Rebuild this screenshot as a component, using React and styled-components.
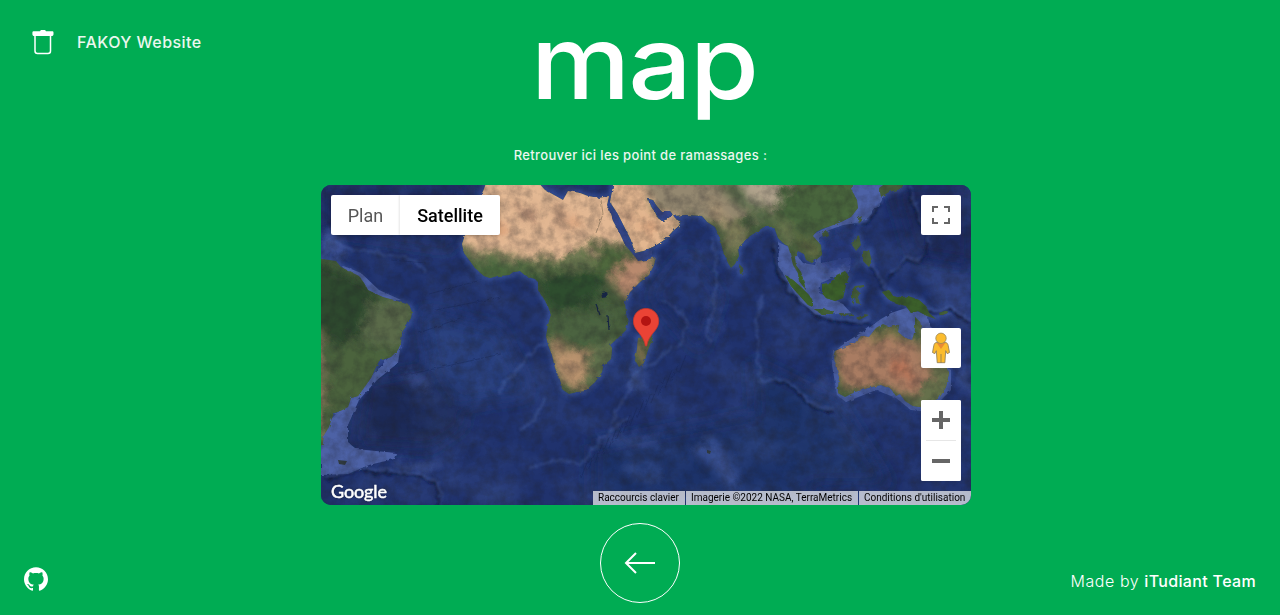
import React from 'react';
import styled, { createGlobalStyle } from 'styled-components';

const GlobalStyle = createGlobalStyle`
  * { box-sizing: border-box; }
  body { margin: 0; background: #00ac53; overflow: hidden; }
  button { font: inherit; border: 0; padding: 0; cursor: pointer; }
  a { color: inherit; text-decoration: none; }
`;

const Page = styled.div`
  display: grid;
  grid-template-columns: 321px 650px 1fr;
  height: 615px;
  background: #00ac53;
  color: #fff;
  font-family: Inter, 'Liberation Sans', sans-serif;
`;

const Side = styled.div`
  display: flex;
  flex-direction: column;
  justify-content: ${(p) => (p.$end ? 'flex-end' : 'space-between')};
  align-items: ${(p) => (p.$end ? 'flex-end' : 'flex-start')};
  padding: ${(p) => (p.$end ? '0 24px 23px 0' : '29px 0 24px 24px')};
`;

const Brand = styled.a`
  display: flex;
  align-items: center;
  gap: 22px;
  padding-left: 7px;
  height: 26px;
  font-size: 16px;
  font-weight: 500;
  letter-spacing: 0.46px;
  color: #ebf7ef;
  white-space: nowrap;
`;

const IconLink = styled.a`
  display: block;
  height: 24px;
  svg { display: block; }
`;

const Credit = styled.p`
  margin: 0;
  font-size: 16px;
  line-height: 22px;
  font-weight: 300;
  letter-spacing: 0.55px;
  white-space: nowrap;
  strong { font-weight: 500; letter-spacing: 0.34px; }
`;

const Main = styled.main`
  display: flex;
  flex-direction: column;
  align-items: center;
`;

const Title = styled.h1`
  margin: 0 4px 0 0;
  height: 140px;
  font-size: 102px;
  line-height: 124px;
  font-weight: 500;
  letter-spacing: -2px;
  transform: scaleX(1.1);
`;

const Intro = styled.p`
  margin: 0 11px 0 0;
  padding-top: 6px;
  height: 45px;
  font-size: 13px;
  line-height: 18px;
  font-weight: 500;
  letter-spacing: 0.35px;
  color: #ebf7ef;
  white-space: nowrap;
`;

const MapFrame = styled.section`
  display: grid;
  width: 650px;
  height: 320px;
  border-radius: 10px;
  overflow: hidden;
  background: #1d2f69;
  font-family: Roboto, sans-serif;
  > * { grid-area: 1 / 1; }
`;

const MapOverlay = styled.div`
  z-index: 1;
  display: flex;
  flex-direction: column;
  justify-content: space-between;
`;

const MapBody = styled.div`
  display: flex;
  justify-content: space-between;
  align-items: flex-start;
  padding: 10px 10px 0;
`;

const TypeSwitch = styled.div`
  display: flex;
  height: 40px;
  background: #fff;
  border-radius: 2px;
  box-shadow: 0 1px 4px -1px rgba(0, 0, 0, 0.3);
`;

const TypeButton = styled.button`
  width: ${(p) => p.$width};
  background: transparent;
  font-size: 18px;
  font-weight: ${(p) => (p.$active ? 500 : 400)};
  color: ${(p) => (p.$active ? '#000' : '#565656')};
  & + & { box-shadow: -1px 0 2px rgba(0, 0, 0, 0.1); }
`;

const Controls = styled.div`
  display: flex;
  flex-direction: column;
`;

const Control = styled.button`
  display: flex;
  align-items: center;
  justify-content: center;
  width: 40px;
  height: 40px;
  margin-top: ${(p) => p.$gap || '0'};
  background: #fff;
  border-radius: 2px;
`;

const Zoom = styled.div`
  display: flex;
  flex-direction: column;
  align-items: center;
  width: 40px;
  height: 81px;
  margin-top: 32px;
  background: #fff;
  border-radius: 2px;
`;

const Divider = styled.span`
  width: 30px;
  height: 1px;
  background: #e6e6e6;
`;

const MapFooter = styled.div`
  display: flex;
  justify-content: space-between;
  align-items: flex-end;
  height: 24px;
`;

const Logo = styled.span`
  padding-left: 10px;
  height: 24px;
  font-family: Lato, sans-serif;
  font-size: 18px;
  line-height: 21px;
  font-weight: 400;
  -webkit-text-stroke: 0.5px #fff;
  letter-spacing: -0.1px;
  text-shadow: 0 0 2px rgba(0, 0, 0, 0.6);
`;

const Legal = styled.div`
  display: flex;
  gap: 1px;
  height: 14px;
  font-size: 10px;
  line-height: 14px;
  color: #000;
`;

const LegalItem = styled.span`
  width: ${(p) => p.$width};
  padding-left: 5px;
  background: rgba(245, 245, 245, 0.7);
  white-space: nowrap;
`;

const Back = styled.button`
  display: flex;
  align-items: center;
  justify-content: center;
  width: 80px;
  height: 80px;
  margin: 18px 12px 0 0;
  border: 1px solid #fff;
  border-radius: 50%;
  background: transparent;
`;

const Satellite = styled.svg`
  display: block;
  width: 650px;
  height: 320px;
`;

const LAND = {
  america:
    'M-5 73L8 75 15 76 20 82 28 86 38 91 43 98 47 105 53 108 62 112 76 116 88 120 91 127 90 133 86 140 81 147 80 158 77 165 70 172 58 176 54 184 50 193 45 200 37 211 30 213 27 222 19 226 13 228 10 236 8 242 3 250 2 258 -5 268Z',
  africa:
    'M166-5L163 4 159 13 152 26 147 38 144 50 141 59 143 68 149 76 154 83 163 91 169 93 176 91 188 90 192 87 199 86 205 91 214 94 217 97 217 105 222 113 227 121 230 130 227 140 225 151 227 160 231 170 234 183 239 195 242 205 248 209 256 207 264 206 274 197 281 187 282 181 290 174 291 163 289 160 297 153 305 145 307 138 305 128 304 117 309 107 318 98 328 90 333 80 335 72 325 75 317 76 311 68 304 60 299 49 292 36 286 20 288 11 278 13 267 11 259 8 247 6 242 15 233 10 224 5 215-5Z',
  asia:
    'M293-5L291 7 289 17 297 29 303 41 310 55 314 68 323 66 334 61 345 54 352 46 358 41 360 37 355 34 351 29 347 34 341 36 337 33 334 27 329 20 327 14 332 15 335 20 340 26 349 26 353 31 365 30 381 31 386 37 394 42 398 51 402 66 407 78 410 83 414 79 418 71 417 63 424 56 429 51 437 46 443 42 453 42 457 53 463 59 467 61 469 68 472 80 477 88 478 96 485 105 482 94 480 87 475 80 474 72 477 66 483 69 485 75 491 78 501 70 500 60 492 51 495 47 501 44 507 42 520 37 530 32 537 23 536 15 530 4 532-5Z',
  australia:
    'M514 166L523 162 534 158 540 151 548 152 555 143 562 139 569 142 578 140 577 147 584 153 591 155 594 145 594 132 599 137 601 146 607 156 617 166 624 176 628 188 625 202 617 215 606 223 592 221 584 216 579 209 575 211 570 204 560 200 547 203 534 207 524 212 517 208 518 192 515 179 512 172Z',
};

const ISLANDS = [
  'M317 153L324 152 330 147 332 153 327 165 323 178 318 182 314 175 316 164Z',
  'M418 79L422 83 423 88 419 89Z',
  'M464 90L472 95 481 103 488 110 492 117 492 122 487 120 478 110 470 101Z',
  'M493 124L503 124 514 127 513 129 500 129Z M518 128L532 129 532 130 519 130Z M535 133L544 129 548 130 538 135Z',
  'M501 99L509 98 516 90 524 86 528 91 525 100 522 113 514 116 505 113 501 108Z',
  'M531 105L534 101 543 100 543 102 535 104 539 108 537 112 539 119 535 118 534 112 531 119Z',
  'M534 53L538 50 540 60 535 66 531 60Z M542 66L548 65 551 76 548 82 542 76Z M537 77L533 82Z',
  'M561 107L568 105 572 111 579 113 587 111 598 115 605 121 608 128 615 134 606 131 597 126 590 128 585 121 575 118 568 115Z',
  'M501 48L506 46 507 50 502 52Z M537 33L541 31 538 39Z',
  'M558 3L565-2 584-3 580 4 568 7 560 12Z M618 128L626 125 627 128 619 131Z',
];

// Faint submarine ridges
const RIDGES = [
  'M391 53Q398 90 392 128Q382 147 389 155',
  'M340 117Q356 118 365 137Q365 154 355 165',
  'M223 157Q205 173 190 192Q178 202 178 210',
  'M290 238Q305 209 315 188Q335 178 350 161',
  'M208 283Q240 270 260 280 281 248 308 232',
  'M440 190Q430 150 442 110',
  'M438 196L456 194',
  'M0 54Q45 67 63 70Q94 72 105 88',
  'M199 245Q220 230 225 215',
];

// Trenches and steep shelf edges
const TRENCHES = [
  'M454 58Q452 86 474 109 493 130 523 135L550 136',
  'M590 0Q594 30 607 45 613 62 600 74 590 72 583 76 578 86 568 88',
  'M4 293Q40 279 65 286 105 285 116 298 122 308 118 320',
  'M456 194Q480 200 482 212 495 222 514 224',
  'M537 38Q555 30 560 15M551 80Q560 95 566 104M606 124Q620 124 630 122 640 130 650 134',
];

function SatelliteImage() {
  const coast = Object.values(LAND).concat(ISLANDS);
  return (
    <Satellite viewBox="0 0 650 320" aria-label="Carte satellite">
      <defs>
        <filter id="rough" x="-5%" y="-5%" width="110%" height="110%">
          <feTurbulence type="fractalNoise" baseFrequency="0.18" numOctaves="3" seed="7" />
          <feDisplacementMap in="SourceGraphic" scale="3" />
        </filter>
        <filter id="wisp" x="-5%" y="-5%" width="110%" height="110%">
          <feTurbulence type="fractalNoise" baseFrequency="0.1" numOctaves="4" seed="19" result="n" />
          <feDisplacementMap in="SourceGraphic" in2="n" scale="10" xChannelSelector="R" yChannelSelector="G" />
          <feGaussianBlur stdDeviation="0.8" />
        </filter>
        <filter id="glow" x="-30%" y="-30%" width="160%" height="160%"><feGaussianBlur stdDeviation="2" /></filter>
        <filter id="haze" x="-40%" y="-40%" width="180%" height="180%"><feGaussianBlur stdDeviation="8" /></filter>
        <filter id="patch" x="-40%" y="-40%" width="180%" height="180%">
          <feGaussianBlur stdDeviation="4" result="b" />
          <feTurbulence type="fractalNoise" baseFrequency="0.06" numOctaves="4" seed="3" result="n" />
          <feDisplacementMap in="b" in2="n" scale="18" />
        </filter>
        <filter id="grain" x="0" y="0" width="100%" height="100%" colorInterpolationFilters="sRGB">
          <feTurbulence type="fractalNoise" baseFrequency="0.09" numOctaves="5" seed="12" />
          <feColorMatrix values="0 0 0 0 0.12  0 0 0 0 0.12  0 0 0 0 0.14  1.4 0 0 0 -0.5" />
        </filter>
        <filter id="seaLight" x="0" y="0" width="100%" height="100%" colorInterpolationFilters="sRGB">
          <feTurbulence type="fractalNoise" baseFrequency="0.02 0.025" numOctaves="5" seed="31" />
          <feColorMatrix values="0 0 0 0 0.25  0 0 0 0 0.34  0 0 0 0 0.58  2 0 0 0 -0.75" />
        </filter>
        <clipPath id="landClip">{coast.map((d) => <path key={d} d={d} />)}</clipPath>
        <clipPath id="asiaClip"><path d={LAND.asia} /></clipPath>
      </defs>

      <rect width="650" height="320" fill="#20326d" />
      <g filter="url(#haze)">
        <path d="M95 0H150L130 65 100 60 0 45V0Z" fill="#1a2b5f" />
        <path d="M365 65L400 110 380 170 330 110Z" fill="#1a2d69" />
        <path d="M570 0H650V80L590 70Z" fill="#1b2b5d" />
        <path d="M45 195L130 180 145 240 110 264 35 260Z" fill="#1b2b59" />
        <path d="M100 125L180 145 210 210 140 220 110 180Z" fill="#273d7b" />
        <path d="M430 175L520 220 570 300 440 300Z" fill="#1d3068" />
        <path d="M270 260L430 230 500 320H270Z" fill="#1e3169" />
      </g>
      <rect width="650" height="320" filter="url(#seaLight)" opacity=".4" />

      <g filter="url(#glow)" fill="none" stroke="#3b559f" strokeWidth="6" strokeLinejoin="round" opacity=".8">
        {coast.map((d) => <path key={d} d={d} />)}
      </g>
      <g filter="url(#rough)" fill="#4d62a6">
        <path d="M80 158L77 178 56 195 38 215 27 240 27 257 35 264 75 268 73 274 48 280 27 289 0 290V245L30 213 70 170Z" />
        <path d="M20 80L40 88 58 105 80 115 68 115 40 107Z" />
        <path d="M530-5H570L560 17 548 32 536 38 522 40 508 45 498 53 500 78 530 72 529 85 500 98 498 108 521 118 530 128 495 130 478 115 458 82 457 57 470 63 482 78 494 80 499 65 491 50 530 30Z" />
        <path d="M516 164L530 154 545 145 560 134 570 128 585 123 606 130 612 150 618 165 596 158 560 160Z" />
        <path d="M286 18L301 42 314 69 331 65 331 71 315 76 297 50Z" fill="#34468a" />
        <path d="M328 15L338 31 348 32 351 28 334 20Z" fill="#34468b" />
        <path d="M512 166L511 180 516 210 525 217 555 205 575 213 590 225 608 227 630 205V185L620 180Z" opacity=".8" />
      </g>
      <g filter="url(#patch)" fill="#4a61a6">
        <path d="M505 58L528 50 538 64 528 82 505 88Z" fill="#263a7a" opacity=".8" />
        <path d="M308 180L320 183 322 206 308 210Z" opacity=".5" />
        <path d="M368 264L385 252 400 258 417 292 411 304 388 280Z" opacity=".6" />
        <path d="M82 193L102 189 108 202 88 200Z" opacity=".6" />
        <path d="M386 117L400 113 401 145 389 160Z" opacity=".3" />
        <path d="M590 75L650 90V150L625 130Z" opacity=".35" />
        <path d="M282 253L340 251 335 259 285 260Z" opacity=".45" />
        <path d="M300 285L340 280 345 293 315 296Z" opacity=".35" />
        <path d="M2 48L20 50 25 72 0 75Z" opacity=".7" />
        <path d="M480 200L508 190 512 213Z" opacity=".4" />
        <path d="M630 185L650 180V205L635 200Z" opacity=".5" />
        <path d="M70 278L120 275 108 290 80 287Z" opacity=".5" />
      </g>
      <g filter="url(#wisp)" fill="none">
        {RIDGES.map((d) => <path key={d} d={d} stroke="#5069ac" strokeWidth="3" opacity=".35" />)}
        {TRENCHES.map((d) => <path key={d} d={d} stroke="#4d66a9" strokeWidth="2.5" opacity=".4" />)}
        {TRENCHES.map((d) => <path key={d} d={d} transform="translate(-1 3)" stroke="#0f1a3c" strokeWidth="2.4" opacity=".8" />)}
      </g>
      <g fill="none" stroke="#15234e" strokeWidth=".7" opacity=".45" filter="url(#rough)">
        {Array.from({ length: 15 }, (_, i) => (
          <path key={i} d={`M${260 + i * 7} ${293 - i * 7.5}l7-18`} />
        ))}
        <path d="M70 75L105 78M108 109L160 95M115 125L180 112M98 148L142 132M90 189L180 169" />
      </g>

      <g filter="url(#rough)">
        <g clipPath="url(#landClip)">
          <rect x="-5" y="-5" width="660" height="330" fill="#455c3b" />
          <g filter="url(#patch)">
            <path d="M-10 75L50 100 55 138 20 160-10 150Z" fill="#2e4a2e" />
            <path d="M50 115L100 115 80 165 40 155Z" fill="#5a6a4a" />
            <path d="M20 155L75 165 35 220-10 240Z" fill="#4c643d" />
            <path d="M-12 145H1L3 240-12 280Z" fill="#8b795d" />
            <path d="M130-10H312L318 40 308 60 280 59 230 73 190 72 138 61Z" fill="#e3b893" />
            <path d="M142 61L223 75 282 61 303 68 275 82 220 88 145 80Z" fill="#6b7750" />
            <path d="M212 85L275 84 286 95 265 127 228 125Z" fill="#2e4d2e" />
            <path d="M145 76L208 79 214 95 175 98 155 92Z" fill="#48663e" />
            <path d="M270 66L300 62 308 76 290 92 270 86Z" fill="#4f683e" />
            <path d="M225 128L295 125 300 148 260 160 225 153Z" fill="#4c6341" />
            <path d="M290 98L308 73 340 70 326 95 305 114Z" fill="#b98a6e" />
            <path d="M224 152L238 158 251 164 276 165 276 187 248 207 236 190Z" fill="#ab8a68" />
            <path d="M274 158H302L280 196 261 210 265 185Z" fill="#5e6f4c" />
            <path d="M238 170L262 168 260 190 244 193Z" fill="#bc9470" />
          </g>
          <g clipPath="url(#asiaClip)" filter="url(#patch)">
            <path d="M285-10H328L333 28 353 25 365 44 340 65 305 73Z" fill="#e3b68f" />
            <path d="M315-10H455L462 24 430 32 390 35 370 38 336 25Z" fill="#94886f" />
            <path d="M392-5H415L451 29 448 37 415 20Z" fill="#5d6e4d" />
            <path d="M387 22L398 17 407 39 391 41Z" fill="#ad9777" />
            <path d="M399 36L421 32 424 54 410 77Z" fill="#7d7c58" />
            <path d="M415-12L473-10 468 16 447 23 425 12Z" fill="#b0a38c" />
            <path d="M462 0L540-5 541 32 500 45 452 35Z" fill="#4a663c" />
            <path d="M450 30L474 40 476 57 463 62Z" fill="#69764f" />
            <path d="M477 51L493 54 499 70 484 73Z" fill="#636f45" />
          </g>
          <g filter="url(#patch)">
            <path d="M510 164L552 146 609 162 620 187 600 211 560 202 520 205Z" fill="#a97c62" />
            <path d="M571 174L585 172 589 193 575 195Z" fill="#bb6e52" opacity=".7" />
            <path d="M593 132H601L610 158 629 180 625 210 600 230 582 214 611 195 598 158Z" fill="#66704b" />
            <path d="M550 143H578L581 154 547 158Z" fill="#827750" />
            <path d="M516 188L525 201 528 215H515Z" fill="#536640" />
            <path d="M315 153L322 153 322 175 315 181Z" fill="#927453" />
            <path d="M460 85H530V125H460ZM560 103H615V135H570Z" fill="#3b5e2c" />
          </g>
          <g filter="url(#patch)" fill="#a27c66" opacity=".75">
            <path d="M194 23L210 20 217 34 204 37ZM234 23H243V31H235ZM232 40L245 30 244 44ZM300 28L313 28 310 39Z" />
            <path d="M249 30L260 40 251 43ZM321 40L336 37 328 46ZM163 44L183 40 190 50Z" fill="#d68e65" />
          </g>
          <path d="M280 107L286 106 287 112 281 113Z" fill="#172746" />
          <path d="M275 119L279 130M287 131L288 145" stroke="#172746" strokeWidth="1.2" />
          <path d="M280 15L282 29 275 48" fill="none" stroke="#7d6d55" strokeWidth=".6" />
        </g>
      </g>
      <path d="M17 275L26 276 24 280 18 279ZM386 265L390 266 389 269 386 268Z" fill="#303b40" />
      <rect width="650" height="320" filter="url(#grain)" opacity=".45" />
    </Satellite>
  );
}

const PinLayer = styled.div`
  z-index: 1;
  justify-self: start;
  align-self: start;
  margin: 123px 0 0 312px;
  height: 39px;
  svg { display: block; }
`;

function Pin() {
  return (
    <PinLayer>
      <svg width="27" height="39" viewBox="0 0 27 39">
        <path d="M13 .4C5.900.4.400 6 .4 13c0 5.200 2.400 8 5.200 11.400 3.100 3.900 5.900 7.600 6.800 13.600h1.300c.9-6 3.700-9.700 6.800-13.600C23.300 21 25.700 18.200 25.700 13 25.700 6 20.100.4 13 .4Z" fill="#ea4335" stroke="#c5372c" strokeWidth=".8" />
        <circle cx="13" cy="13" r="5" fill="#b31412" />
      </svg>
    </PinLayer>
  );
}

export default function App() {
  return (
    <>
      <GlobalStyle />
      <Page>
        <Side>
          <Brand href="#">
            <svg width="24" height="26" viewBox="0 0 24 26" fill="none">
              <path d="M4 6v16c0 1.700.9 2.500 2.500 2.500h10.500c1.600 0 2.500-.8 2.500-2.500V6" stroke="#fff" strokeWidth="1.500" />
              <path d="M3 2.300h6C9.300 1.300 10 1 11 1h2c1 0 1.700.3 2 1.300h6c1 0 1.500.5 1.500 1.400v1.200c0 1.300-.7 2.100-1.900 2.100H3.300c-1.200 0-1.900-.8-1.900-2.100V3.700c0-.9.6-1.400 1.600-1.400Z" fill="#fff" />
            </svg>
            <span>FAKOY Website</span>
          </Brand>
          <IconLink href="#" aria-label="GitHub">
            <svg width="24" height="24" viewBox="0 0 24 24" fill="#fff">
              <path d="M12 .297c-6.630 0-12 5.373-12 12 0 5.303 3.438 9.800 8.205 11.385.6.113.82-.258.82-.577 0-.285-.01-1.040-.015-2.040-3.338.724-4.042-1.610-4.042-1.610C4.422 18.070 3.633 17.700 3.633 17.700c-1.087-.744.084-.729.084-.729 1.205.084 1.838 1.236 1.838 1.236 1.070 1.835 2.809 1.305 3.495.998.108-.776.417-1.305.76-1.605-2.665-.3-5.466-1.332-5.466-5.930 0-1.310.465-2.380 1.235-3.220-.135-.303-.54-1.523.105-3.176 0 0 1.005-.322 3.300 1.230.96-.267 1.980-.399 3-.405 1.020.006 2.040.138 3 .405 2.280-1.552 3.285-1.230 3.285-1.230.645 1.653.24 2.873.12 3.176.765.840 1.230 1.910 1.230 3.220 0 4.610-2.805 5.625-5.475 5.920.42.360.81 1.096.81 2.220 0 1.606-.015 2.896-.015 3.286 0 .315.21.690.825.570C20.565 22.092 24 17.592 24 12.297c0-6.627-5.373-12-12-12" />
            </svg>
          </IconLink>
        </Side>

        <Main>
          <Title>map</Title>
          <Intro>Retrouver ici les point de ramassages :</Intro>
          <MapFrame>
            <SatelliteImage />
            <Pin />
            <MapOverlay>
              <MapBody>
                <TypeSwitch>
                  <TypeButton $width="69px">Plan</TypeButton>
                  <TypeButton $width="100px" $active>Satellite</TypeButton>
                </TypeSwitch>
                <Controls>
                  <Control aria-label="Plein écran">
                    <svg width="18" height="18" viewBox="0 0 18 18" fill="#666">
                      <path d="M0 0v6h2V2h4V0H0Zm16 0h-4v2h4v4h2V0h-2Zm0 16h-4v2h6v-6h-2v4ZM2 12H0v6h6v-2H2v-4Z" />
                    </svg>
                  </Control>
                  <Control $gap="93px" aria-label="Street View">
                    <svg width="18" height="32" viewBox="0 0 18 32">
                      <path d="M5 10.500h8c2 0 2.700 1 3.200 3l1.300 7-2.300 1.200-1.500-3-.8 12H5.200l-.9-12-1.500 3L.5 20.500l1.300-7c.5-2 1.200-3 3.200-3Z" fill="#fbbc2e" stroke="#8c7a56" strokeWidth=".8" />
                      <path d="M4.700 11h8.600L9 17Z" fill="#e98a36" />
                      <path d="M9 22v9" stroke="#8c7a56" strokeWidth=".8" />
                      <circle cx="9" cy="6.300" r="5.200" fill="#fbbc2e" stroke="#9b8658" strokeWidth=".8" />
                    </svg>
                  </Control>
                  <Zoom>
                    <Control aria-label="Zoom avant">
                      <svg width="18" height="18" viewBox="0 0 18 18" fill="#666"><path d="M7 0h4v7h7v4h-7v7H7v-7H0V7h7Z" /></svg>
                    </Control>
                    <Divider />
                    <Control aria-label="Zoom arrière">
                      <svg width="18" height="18" viewBox="0 0 18 18" fill="#666"><path d="M0 7h18v4H0Z" /></svg>
                    </Control>
                  </Zoom>
                </Controls>
              </MapBody>
              <MapFooter>
                <Logo>Google</Logo>
                <Legal>
                  <LegalItem $width="92px">Raccourcis clavier</LegalItem>
                  <LegalItem $width="172px">Imagerie ©2022 NASA, TerraMetrics</LegalItem>
                  <LegalItem $width="112px">Conditions d'utilisation</LegalItem>
                </Legal>
              </MapFooter>
            </MapOverlay>
          </MapFrame>
          <Back aria-label="Retour">
            <svg width="32" height="24" viewBox="0 0 32 24" fill="none" stroke="#fff" strokeWidth="2">
              <path d="M31 12H2M12 2L2 12l10 10" />
            </svg>
          </Back>
        </Main>

        <Side $end>
          <Credit>Made by <strong>iTudiant Team</strong></Credit>
        </Side>
      </Page>
    </>
  );
}
